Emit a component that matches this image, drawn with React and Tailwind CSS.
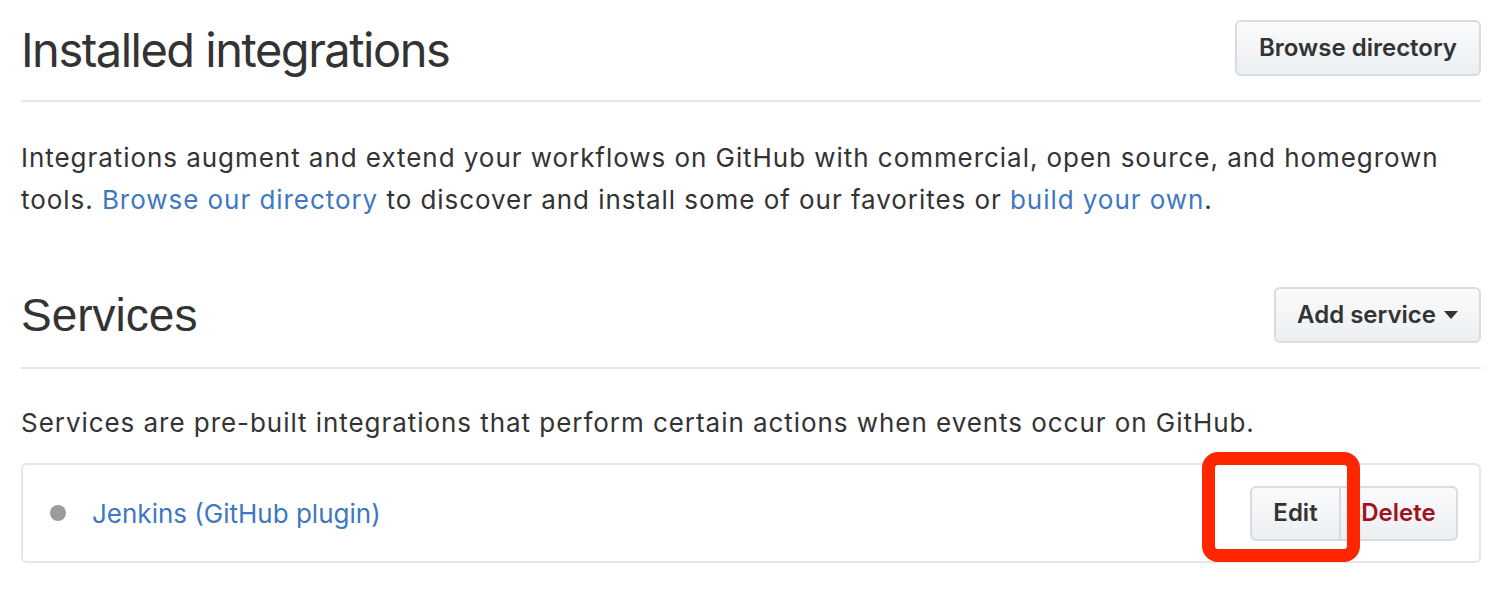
import React from "react";

const sans = "font-['Inter','Noto_Sans',sans-serif]";
const btn =
  "rounded-[6px] border-2 border-[#d9dbdd] bg-gradient-to-b from-[#fafbfc] to-[#eceff2] font-['Inter',sans-serif] font-semibold text-[#333] leading-none";

const Subhead = ({ title, titleClass, children }) => (
  <div className="flex items-center justify-between border-b-2 border-[#e6e6e6] pt-[20px] pb-[24px]">
    <h2 className={titleClass}>{title}</h2>
    {children}
  </div>
);

export default function App() {
  return (
    <div className="relative min-h-[604px] bg-white text-[#333]">
      <div className="ml-[21px] mr-[31px]">
        {/* Installed integrations */}
        <Subhead
          title="Installed integrations"
          titleClass={`${sans} text-[47px] font-normal tracking-[-1.5px] leading-none mt-[2px]`}
        >
          <button className={`${btn} h-[56px] px-[22px] text-[24px]`}>Browse directory</button>
        </Subhead>

        <p className={`${sans} mt-[35px] text-[26px] leading-[42px] tracking-[0.95px]`}>
          Integrations augment and extend your workflows on GitHub with commercial, open source, and homegrown
          tools. <a className="text-[#4078c0]">Browse our directory</a> to discover and install some of our
          favorites or <a className="text-[#4078c0]">build your own</a>.
        </p>

        {/* Services */}
        <div className="mt-[46px]">
          <Subhead
            title="Services"
            titleClass="font-['Liberation_Sans',Arial,sans-serif] text-[46px] font-normal leading-none"
          >
            <button className={`${btn} h-[56px] px-[21px] text-[24px] flex items-center gap-[8px]`}>
              Add service
              <svg width="14" height="8" viewBox="0 0 14 8">
                <path d="M0 0h14L7 8z" fill="#333" />
              </svg>
            </button>
          </Subhead>
        </div>

        <p className={`${sans} mt-[33px] text-[26px] leading-[42px] tracking-[0.95px]`}>
          Services are pre-built integrations that perform certain actions when events occur on GitHub.
        </p>

        <div className="mt-[19px] flex h-[100px] items-center justify-between rounded-[6px] border-2 border-[#e6e6e6] pl-[27px] pr-[21px]">
          <div className="flex items-center gap-[26px]">
            <span className="h-[16px] w-[16px] rounded-full bg-[#9b9b9b]" />
            <a className={`${sans} text-[26px] text-[#4078c0]`}>Jenkins (GitHub plugin)</a>
          </div>
          <div className="flex">
            <button className={`${btn} h-[55px] w-[91px] rounded-r-none text-[24px]`}>Edit</button>
            <button className={`${btn} h-[55px] w-[119px] -ml-[2px] rounded-l-none text-[24px] text-[#a3121d]`}>
              Delete
            </button>
          </div>
        </div>
      </div>

      {/* annotation highlight */}
      <div className="pointer-events-none absolute left-[1202px] top-[452px] h-[110px] w-[158px] rounded-[16px] border-[13px] border-[#ff2600]" />
    </div>
  );
}
